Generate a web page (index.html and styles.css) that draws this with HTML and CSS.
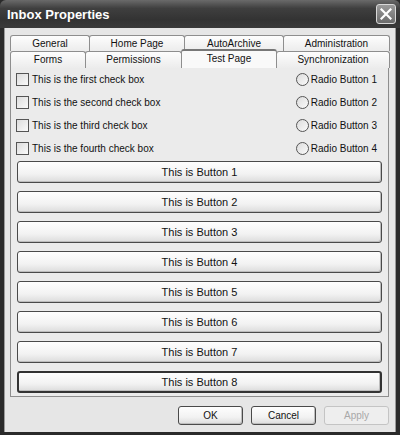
FILE: index.html
```html
<!DOCTYPE html>
<html lang="en">
<head>
    <meta charset="UTF-8">
    <title>Inbox Properties</title>
    <link rel="stylesheet" href="styles.css">
</head>
<body>
    <div class="window">
        <div class="titlebar">
            <div class="title">Inbox Properties</div>
            <div class="close-btn">
                <svg width="12" height="12" viewBox="0 0 12 12">
                    <path d="M1.5 1.5 L10.5 10.5 M10.5 1.5 L1.5 10.5" stroke="#fff" stroke-width="2.2" stroke-linecap="square"/>
                </svg>
            </div>
        </div>

        <div class="content">
            <div class="tabs">
                <div class="tab-row row-back">
                    <div class="tab">General</div>
                    <div class="tab">Home Page</div>
                    <div class="tab">AutoArchive</div>
                    <div class="tab">Administration</div>
                </div>
                <div class="tab-row row-front">
                    <div class="tab">Forms</div>
                    <div class="tab">Permissions</div>
                    <div class="tab selected">Test Page</div>
                    <div class="tab">Synchronization</div>
                </div>
            </div>

            <div class="panel">
                <div class="options">
                    <div class="option-col">
                        <label class="check-item"><span class="checkbox"></span>This is the first check box</label>
                        <label class="check-item"><span class="checkbox"></span>This is the second check box</label>
                        <label class="check-item"><span class="checkbox"></span>This is the third check box</label>
                        <label class="check-item"><span class="checkbox"></span>This is the fourth check box</label>
                    </div>
                    <div class="option-col">
                        <label class="check-item"><span class="radio"></span>Radio Button 1</label>
                        <label class="check-item"><span class="radio"></span>Radio Button 2</label>
                        <label class="check-item"><span class="radio"></span>Radio Button 3</label>
                        <label class="check-item"><span class="radio"></span>Radio Button 4</label>
                    </div>
                </div>

                <div class="button-list">
                    <button class="btn">This is Button 1</button>
                    <button class="btn">This is Button 2</button>
                    <button class="btn">This is Button 3</button>
                    <button class="btn">This is Button 4</button>
                    <button class="btn">This is Button 5</button>
                    <button class="btn">This is Button 6</button>
                    <button class="btn">This is Button 7</button>
                    <button class="btn focused">This is Button 8</button>
                </div>
            </div>

            <div class="footer">
                <button class="btn dialog-btn">OK</button>
                <button class="btn dialog-btn">Cancel</button>
                <button class="btn dialog-btn disabled">Apply</button>
            </div>
        </div>
    </div>
</body>
</html>
```

FILE: styles.css
```css
* {
    margin: 0;
    padding: 0;
    box-sizing: border-box;
}

body {
    font-family: Tahoma, 'Liberation Sans', Arial, sans-serif;
    font-size: 10px;
    color: #111;
    background: #1e1e1e;
}

.window {
    width: 400px;
    height: 435px;
    background: #2a2a2a;
    padding: 0 4px 3px 4px;
    display: flex;
    flex-direction: column;
}

.titlebar {
    height: 28px;
    margin: 0 -4px;
    padding: 0 4px 0 7px;
    display: flex;
    align-items: center;
    justify-content: space-between;
    background: linear-gradient(#6a6a6a, #3f3f3f 30%, #333 70%, #3a3a3a);
    border-radius: 6px 6px 0 0;
}

.title {
    color: #fff;
    font-weight: bold;
    font-size: 13px;
    padding-top: 1px;
}

.close-btn {
    width: 20px;
    height: 20px;
    border: 1px solid #d8d8d8;
    border-radius: 3px;
    background: linear-gradient(#9a9a9a, #6c6c6c);
    display: flex;
    align-items: center;
    justify-content: center;
}

.content {
    flex: 1;
    background: #e6e6e6;
    border-left: 1px solid #9a9a9a;
    border-right: 1px solid #9a9a9a;
    padding: 7px 6px 0 5px;
    display: flex;
    flex-direction: column;
}

.tab-row {
    display: grid;
    height: 16px;
}

.row-back {
    grid-template-columns: 79px 95px 99px 106px;
    margin-right: -1px;
}

.row-front {
    grid-template-columns: 75px 96px 95px 113px;
    position: relative;
    z-index: 1;
}

.tab {
    border: 1px solid #8e8e8e;
    border-bottom: none;
    border-radius: 3px 3px 0 0;
    background: linear-gradient(#fdfdfd, #ececec);
    text-align: center;
    line-height: 15px;
    margin-right: -1px;
}

.tab.selected {
    margin-top: -2px;
    height: 19px;
    background: #f9f9f9;
    border-top: 2px solid #777;
    line-height: 15px;
}

.panel {
    border: 1px solid #8e8e8e;
    background: #ebebeb;
    padding: 0 6px 4px 6px;
    height: 330px;
}

.options {
    display: flex;
    justify-content: space-between;
    padding-right: 5px;
}

.option-col {
    display: flex;
    flex-direction: column;
}

.check-item {
    height: 23px;
    display: flex;
    align-items: center;
}

.checkbox {
    width: 13px;
    height: 13px;
    border: 1px solid #555;
    background: linear-gradient(135deg, #dcdcdc, #fafafa);
    margin: 0 3px 0 -1px;
}

.radio {
    width: 13px;
    height: 13px;
    border: 1px solid #555;
    border-radius: 50%;
    background: linear-gradient(135deg, #dcdcdc, #fafafa);
    margin-right: 2px;
}

.button-list {
    display: flex;
    flex-direction: column;
    gap: 8px;
    margin-top: 1px;
}

.btn {
    font-family: inherit;
    font-size: 11px;
    color: #111;
    height: 22px;
    border: 1px solid #4a4a4a;
    border-radius: 3px;
    background: linear-gradient(#fefefe, #f2f2f2 60%, #dcdcdc);
    box-shadow: inset -1px -1px 0 #bdbdbd;
}

.btn.focused {
    border: 2px solid #333;
}

.footer {
    display: flex;
    justify-content: flex-end;
    gap: 8px;
    padding: 9px 0 0 0;
}

.dialog-btn {
    width: 65px;
    height: 19px;
    font-size: 10px;
}

.dialog-btn.disabled {
    color: #a8a8a8;
    border-color: #c4c4c4;
    background: #eeeeee;
    box-shadow: none;
}
```
